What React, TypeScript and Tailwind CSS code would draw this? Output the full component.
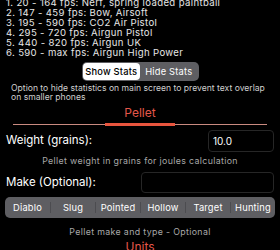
const stats = [
  '1. 20 - 164 fps: Nerf, spring loaded paintball',
  '2. 147 - 459 fps: Bow, Airsoft',
  '3. 195 - 590 fps: CO2 Air Pistol',
  '4. 295 - 720 fps: Airgun Pistol',
  '5. 440 - 820 fps: Airgun UK',
  '6. 590 - max fps: Airgun High Power',
];

const types = ['Diablo', 'Slug', 'Pointed', 'Hollow', 'Target', 'Hunting'];

export default function App() {
  return (
    <div className="h-[250px] w-[280px] overflow-hidden bg-black font-['Inter',sans-serif] text-white">
      <div className="-mt-[2px] pl-[6px] text-[9.6px] leading-[10px] tracking-[0.35px] text-[#e6e6e6]">
        {stats.map((s) => (
          <div key={s} className="whitespace-nowrap">{s}</div>
        ))}
      </div>

      <div className="mt-[4px] flex justify-center">
        <div className="flex h-[19px] w-[117px] rounded-[5px] bg-[#5e5e62] p-[1px] text-[9.3px] tracking-[0.2px]">
          <div className="flex flex-1 items-center justify-center rounded-[4px] bg-white font-medium text-black">
            Show Stats
          </div>
          <div className="flex flex-1 items-center justify-center text-white">Hide Stats</div>
        </div>
      </div>

      <p className="mt-[2.5px] pl-[11px] pr-[8px] text-[8.6px] leading-[9px] text-[#cfcfcf]">
        Option to hide statistics on main screen to prevent text overlap on smaller phones
      </p>

      <div className="mt-[4.5px] text-center text-[12px] leading-[14px] text-[#e4574a]">Pellet</div>

      <div className="relative mx-[13px] mt-[3px] h-[3px]">
        <div className="absolute inset-x-0 top-[1px] h-[1px] bg-[#c98a80]" />
        <div className="absolute left-[92px] top-0 h-[3px] w-[70px] bg-[#e8553e]" />
      </div>

      <div className="mt-[4px] flex items-center justify-between pl-[6px] pr-[6px]">
        <span className="text-[11.5px]">Weight (grains):</span>
        <div className="flex h-[22px] w-[66px] items-center rounded-[4px] border border-[#262626] px-[4px] text-[10px]">
          10.0
        </div>
      </div>

      <p className="mt-[4px] text-center text-[8.8px] leading-[10px] tracking-[0.35px] text-[#a8a8a8]">
        Pellet weight in grains for joules calculation
      </p>

      <div className="mt-[6px] flex items-center justify-between pl-[6px] pr-[6px]">
        <span className="text-[11.5px]">Make (Optional):</span>
        <div className="h-[21px] w-[133px] rounded-[4px] border border-[#262626]" />
      </div>

      <div className="mx-[5px] mt-[4px] flex h-[21px] items-center rounded-[5px] bg-[#5e5e62] text-[9.3px] tracking-[0.2px]">
        {types.map((t, i) => (
          <div key={t} className="flex flex-1 items-center">
            {i > 0 && <div className="h-[11px] w-px bg-[#4c4c50]" />}
            <div className="flex-1 text-center">{t}</div>
          </div>
        ))}
      </div>

      <p className="mt-[9px] text-center text-[8.8px] leading-[10px] tracking-[0.35px] text-[#a8a8a8]">
        Pellet make and type - Optional
      </p>

      <div className="mt-[3px] text-center text-[12px] leading-[14px] text-[#e4574a]">Units</div>
    </div>
  );
}
